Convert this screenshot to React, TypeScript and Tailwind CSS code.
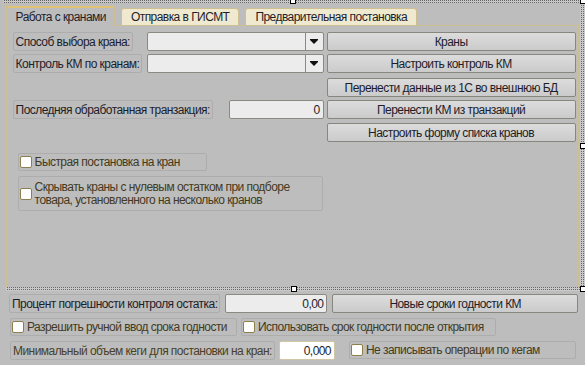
import React from "react";

const hatch =
  "bg-[conic-gradient(#666_0_25%,#c9c9c9_0)] bg-[length:2px_2px]";

function Handle({ className }: { className: string }) {
  return (
    <div
      className={`absolute w-[6px] h-[6px] bg-white border border-black ${className}`}
    />
  );
}

function Label({ text, className = "" }: { text: string; className?: string }) {
  return (
    <div
      className={`h-[19px] inline-flex items-center px-[2px] border border-[#adadad] rounded-[2px] whitespace-nowrap ${className}`}
    >
      {text}
    </div>
  );
}

function Button({ text, className = "" }: { text: string; className?: string }) {
  return (
    <div
      className={`h-[19px] flex items-center justify-center border border-[#88877f] rounded-[2px] bg-gradient-to-b from-[#dcdcdc] to-[#cbcbcb] whitespace-nowrap ${className}`}
    >
      {text}
    </div>
  );
}

function Box() {
  return (
    <div className="w-[12px] h-[12px] shrink-0 bg-white border border-[#8e7e4c] rounded-[2px]" />
  );
}

function Check({ text, className = "" }: { text: string; className?: string }) {
  return (
    <div
      className={`h-[18px] flex items-center gap-[3px] pl-[1px] border border-[#adadad] rounded-[2px] text-[#433a22] whitespace-nowrap ${className}`}
    >
      <Box />
      <span>{text}</span>
    </div>
  );
}

function Input({
  value = "",
  className = "",
  white = false,
}: {
  value?: string;
  className?: string;
  white?: boolean;
}) {
  return (
    <div
      className={`h-[19px] flex items-center justify-end pr-[3px] border rounded-[2px] ${
        white ? "bg-white border-[#cfc7a6]" : "bg-[#ececec] border-[#8b8a82]"
      } ${className}`}
    >
      {value}
    </div>
  );
}

function Combo() {
  return (
    <div className="w-[177px] h-[19px] flex border border-[#8b8a82] rounded-[2px] bg-[#ececec]">
      <div className="flex-1" />
      <div className="w-[18px] flex items-center justify-center border-l border-[#8b8a82]">
        <svg width="8" height="5" viewBox="0 0 8 5">
          <path d="M0 0H8V1L4 5L0 1Z" fill="#111" />
        </svg>
      </div>
    </div>
  );
}

export default function App() {
  return (
    <div className="relative w-[585px] h-[365px] overflow-hidden bg-[#bdbdbd] text-[12px] tracking-[-0.55px] leading-[14px] text-[#1d1d2b] font-['Liberation_Sans',Arial,sans-serif]">
      {/* top hatched strip */}
      <div className={`h-[3px] ml-[3px] ${hatch}`} />

      <div className="flex h-[284px]">
        <div className="w-[5px]" />
        {/* tab control */}
        <div className="flex-1 flex flex-col">
          <div className="flex items-end h-[22px] pt-[2px] border-l-2 border-[#cdbf92]">
            <div className="h-[20px] px-[8px] flex items-center bg-[#bdbdbd] border-t-2 border-x border-t-[#e2c373] border-x-[#cdbf92] rounded-t-[3px] -mb-[1px] relative z-10">
              Работа с кранами
            </div>
            <div className="ml-[6px] h-[17px] px-[9px] flex items-center bg-[#efe9cf] border-t border-x border-[#cdbf92] rounded-t-[3px]">
              Отправка в ГИСМТ
            </div>
            <div className="ml-[6px] h-[17px] px-[9px] flex items-center bg-[#efe9cf] border-t border-x border-[#cdbf92] rounded-t-[3px]">
              Предварительная постановка
            </div>
            <div className="flex-1" />
          </div>
          <div className="flex-1 border-t border-l-2 border-r border-[#cdbf92] pl-[6px] pt-[6px] pr-[2px] flex flex-col">
            <div className="flex">
              <div className="w-[134px]">
                <Label text="Способ выбора крана:" />
              </div>
              <Combo />
              <Button text="Краны" className="ml-[3px] w-[249px]" />
            </div>
            <div className="flex mt-[3px]">
              <div className="w-[134px]">
                <Label text="Контроль КМ по кранам:" />
              </div>
              <Combo />
              <Button text="Настроить контроль КМ" className="ml-[3px] w-[249px]" />
            </div>
            <div className="flex mt-[5px] justify-end">
              <Button text="Перенести данные из 1С во внешнюю БД" className="w-[249px]" />
            </div>
            <div className="flex mt-[3px]">
              <div className="w-[216px]">
                <Label text="Последняя обработанная транзакция:" />
              </div>
              <Input value="0" className="w-[95px]" />
              <Button text="Перенести КМ из транзакций" className="ml-[3px] w-[249px]" />
            </div>
            <div className="flex mt-[4px] justify-end">
              <Button text="Настроить форму списка кранов" className="w-[249px]" />
            </div>
            <div className="pl-[5px] mt-[11px] flex flex-col gap-[5px]">
              <Check text="Быстрая постановка на кран" className="w-[189px]" />
              <div className="w-[305px] h-[35px] flex items-center gap-[3px] pl-[1px] border border-[#adadad] rounded-[2px] text-[#433a22]">
                <Box />
                <span className="leading-[13px]">
                  Скрывать краны с нулевым остатком при подборе
                  <br />
                  товара, установленного на несколько кранов
                </span>
              </div>
            </div>
          </div>
        </div>
        <div className="w-[2px]" />
        <div className={`w-[5px] ${hatch}`} />
      </div>

      {/* bottom hatched band */}
      <div className={`h-[4px] ml-[6px] ${hatch}`} />

      {/* bottom panel */}
      <div className="pl-[9px] pr-[7px] pt-[3px] flex flex-col gap-[5px]">
        <div className="flex">
          <div className="w-[216px]">
            <Label text="Процент погрешности контроля остатка:" />
          </div>
          <Input value="0,00" className="w-[103px]" />
          <Button text="Новые сроки годности КМ" className="ml-[5px] w-[246px]" />
        </div>
        <div className="flex pl-[1px]">
          <Check text="Разрешить ручной ввод срока годности" className="w-[227px]" />
          <Check text="Использовать срок годности после открытия" className="ml-[4px] w-[255px]" />
        </div>
        <div className="flex pl-[1px]">
          <div className="w-[269px]">
            <Label text="Минимальный объем кеги для постановки на кран:" className="text-[#4a4026]" />
          </div>
          <Input value="0,000" white className="w-[56px]" />
          <Check text="Не записывать операции по кегам" className="ml-[14px] w-[227px]" />
        </div>
      </div>

      {/* selection handles */}
      <Handle className="left-[290px] top-[-2px]" />
      <Handle className="left-[580px] top-[-2px]" />
      <Handle className="left-[580px] top-[143px]" />
      <Handle className="left-[291px] top-[286px]" />
      <Handle className="left-[580px] top-[286px]" />
    </div>
  );
}
